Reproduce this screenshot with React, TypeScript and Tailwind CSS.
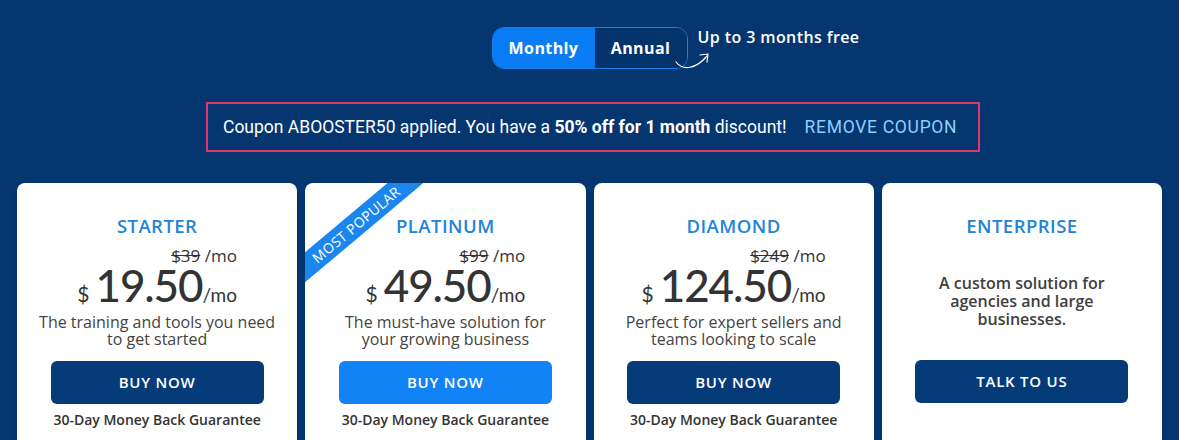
import React from "react";

interface Plan {
  name: string;
  oldPrice?: string;
  price?: string;
  desc: string;
  cta: string;
  popular?: boolean;
}

const plans: Plan[] = [
  { name: "STARTER", oldPrice: "$39", price: "19.50", desc: "The training and tools you need to get started", cta: "BUY NOW" },
  { name: "PLATINUM", oldPrice: "$99", price: "49.50", desc: "The must-have solution for your growing business", cta: "BUY NOW", popular: true },
  { name: "DIAMOND", oldPrice: "$249", price: "124.50", desc: "Perfect for expert sellers and teams looking to scale", cta: "BUY NOW" },
  { name: "ENTERPRISE", desc: "A custom solution for agencies and large businesses.", cta: "TALK TO US" },
];

const PlanCard = ({ plan }: { plan: Plan }) => {
  const custom = !plan.price;
  return (
    <div className="relative h-[280px] overflow-hidden rounded-lg bg-white shadow-md">
      {plan.popular && (
        <div className="absolute left-[-54px] top-[30px] flex h-[23px] w-[210px] -rotate-[40deg] items-center justify-center bg-[#1a86ee] text-[14px] tracking-wide text-white">
          MOST POPULAR
        </div>
      )}
      <div className="flex flex-col items-center pt-[32px] text-center">
        <div className="text-[18.5px] font-semibold leading-[22px] tracking-wide text-[#2384d6]">{plan.name}</div>
        {custom ? (
          <>
            <p className="mt-[37px] w-[210px] text-[16px] font-semibold leading-[18px] text-[#404040]">{plan.desc}</p>
            <button className="mt-[32px] h-[43px] w-[213px] rounded-md bg-[#063b7a] text-[15px] font-semibold tracking-wider text-white">
              {plan.cta}
            </button>
          </>
        ) : (
          <>
            <div className="flex flex-col items-end">
              <div className="mt-[9px] text-[17px] leading-[20px] text-[#333]">
                <span className="line-through">{plan.oldPrice}</span> /mo
              </div>
              <div className="flex items-baseline leading-[38px] text-[#333]" style={{ fontFamily: "Lato, sans-serif" }}>
                <span className="mr-[6px] text-[21px]">$</span>
                <span className="text-[44px] font-medium tracking-tight">{plan.price}</span>
                <span className="text-[19px]">/mo</span>
              </div>
            </div>
            <p className="mt-[0px] w-[237px] text-[16px] leading-[17px] text-[#444]">{plan.desc}</p>
            <button
              className={
                plan.popular
                  ? "mt-[13px] h-[43px] w-[213px] rounded-md bg-[#1183f6] text-[15px] font-semibold tracking-wider text-white"
                  : "mt-[13px] h-[43px] w-[213px] rounded-md bg-[#063b7a] text-[15px] font-semibold tracking-wider text-white"
              }
            >
              {plan.cta}
            </button>
            <div className="mt-[5px] text-[14px] font-semibold text-[#333]">30-Day Money Back Guarantee</div>
          </>
        )}
      </div>
    </div>
  );
};

export default function App() {
  return (
    <div className="h-[440px] w-full overflow-hidden bg-[#05366f]" style={{ fontFamily: "'Open Sans', 'Noto Sans', sans-serif" }}>
      <div className="flex justify-center pt-[27px]">
        <div className="relative">
          <div className="flex h-[42px] overflow-hidden rounded-xl border border-[#1780ee] text-[16px] font-bold tracking-wide text-white">
            <div className="flex w-[102px] items-center justify-center bg-[#0b7df4]">Monthly</div>
            <div className="flex w-[92px] items-center justify-center bg-[#05336b]">Annual</div>
          </div>
          <div className="absolute left-[206px] top-[-2px] whitespace-nowrap text-[16px] font-semibold tracking-wide text-white">
            Up to 3 months free
          </div>
          <svg className="absolute left-[182px] top-[22px]" width="40" height="24" viewBox="0 0 40 24" fill="none">
            <path d="M2 13 C 9 22, 22 20, 33 7" stroke="white" strokeWidth="1.2" strokeLinecap="round" />
            <path d="M26 6 L34 5 L33 13" stroke="white" strokeWidth="1.2" strokeLinecap="round" strokeLinejoin="round" />
          </svg>
        </div>
      </div>

      <div
        className="ml-[206px] mt-[33px] flex h-[50px] w-[774px] items-center border-2 border-[#e0356f] pl-[15px] text-[17.5px] text-white"
        style={{ fontFamily: "Roboto, 'Liberation Sans', sans-serif" }}
      >
        <span>
          Coupon ABOOSTER50 applied. You have a <b className="font-bold">50% off for 1 month</b> discount!
        </span>
        <span className="ml-[18px] tracking-[0.04em] text-[#8ccfff]">REMOVE COUPON</span>
      </div>

      <div className="mt-[31px] grid grid-cols-4 gap-2 px-[17px]">
        {plans.map((p) => (
          <PlanCard key={p.name} plan={p} />
        ))}
      </div>
    </div>
  );
}
